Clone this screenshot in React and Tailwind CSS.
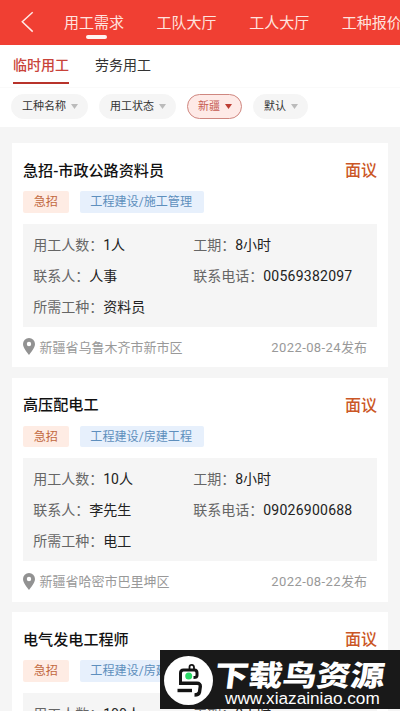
import React from 'react';

const NAV = ['用工需求', '工队大厅', '工人大厅', '工种报价'];

const FILTERS = [
  { label: '工种名称' },
  { label: '用工状态' },
  { label: '新疆', active: true },
  { label: '默认' },
];

const JOBS = [
  { title: '急招-市政公路资料员', category: '工程建设/施工管理', count: '1人', hours: '8小时', contact: '人事', phone: '00569382097', trade: '资料员', place: '新疆省乌鲁木齐市新市区', date: '2022-08-24' },
  { title: '高压配电工', category: '工程建设/房建工程', count: '10人', hours: '8小时', contact: '李先生', phone: '09026900688', trade: '电工', place: '新疆省哈密市巴里坤区', date: '2022-08-22' },
  { title: '电气发电工程师', category: '工程建设/房建工程', count: '100人', hours: '8小时' },
];

function Header() {
  return (
    <header className="flex h-[44.5px] shrink-0 items-center overflow-hidden bg-[#f03f33] text-[15px] text-[#ffe3df]">
      <svg className="ml-[20px] mr-[30px] h-[22px] w-[14px] shrink-0" viewBox="0 0 14 22" fill="none" stroke="#ffe9e6" strokeWidth="1.5">
        <path d="M12.7 1.2 2.3 10.8 12.7 20.6" />
      </svg>
      <nav className="flex gap-[32.6px]">
        {NAV.map((item, i) => (
          <div key={item} className="relative shrink-0 whitespace-nowrap pt-px leading-[44px]">
            {item}
            {i === 0 && <span className="absolute left-[22px] top-[35px] h-[4px] w-[21px] rounded-full bg-[#fff3f1]" />}
          </div>
        ))}
      </nav>
    </header>
  );
}

function Field({ label, value }) {
  return (
    <div className="whitespace-nowrap text-[#666]">
      {label}：<span className={/^\d{5}/.test(value) ? 'tracking-[0.25px] text-[#222]' : 'text-[#222]'}>{value}</span>
    </div>
  );
}

function JobCard({ job }) {
  return (
    <article className="flex h-[224.4px] shrink-0 flex-col bg-white px-[11px] pt-[16px]">
      <div className="flex h-[24px] items-center justify-between font-medium">
        <h2 className="text-[15.1px] text-[#111]">{job.title}</h2>
        <span className="text-[16px] text-[#cb5726]">面议</span>
      </div>
      <div className="mt-[8px] flex gap-[11px] text-[12.1px] leading-[20.5px]">
        <span className="w-[45.5px] rounded-[2px] bg-[#feece4] pt-px text-center text-[#c2683f]">急招</span>
        <span className="rounded-[2px] bg-[#e7f0fc] pl-[10.8px] pr-[11.7px] pt-px text-[#5e8fbd]">{job.category}</span>
      </div>
      <div className="mt-[11px] grid h-[103px] shrink-0 grid-cols-[160px_1fr] content-start bg-[#f5f5f5] pl-[10.2px] pt-[6px] text-[14px] leading-[31px]">
        <Field label="用工人数" value={job.count} />
        <Field label="工期" value={job.hours} />
        {job.contact && (
          <>
            <Field label="联系人" value={job.contact} />
            <Field label="联系电话" value={job.phone} />
            <Field label="所需工种" value={job.trade} />
          </>
        )}
      </div>
      {job.place && (
        <div className="flex h-[41px] items-center pr-[10px] text-[13px] text-[#999]">
          <svg className="mr-[4.5px] h-[17px] w-[12px]" viewBox="0 0 12 17" fill="#929292">
            <path fillRule="evenodd" d="M6 0a6 6 0 0 0-6 6c0 4 4.200 8.600 6 11 1.800-2.400 6-7 6-11a6 6 0 0 0-6-6Zm0 3.800a2.200 2.200 0 1 1 0 4.400 2.200 2.200 0 0 1 0-4.400Z" />
          </svg>
          <span className="pt-px">{job.place}</span>
          <span className="ml-auto pt-px"><span className="tracking-[0.4px]">{job.date}</span>发布</span>
        </div>
      )}
    </article>
  );
}

function SiteBadge() {
  return (
    <aside className="absolute left-[160px] top-[650px] flex h-[59px] w-[240px] bg-[#191919] text-white">
      <svg className="ml-[4px] mt-[6px] h-[49px] w-[49px] shrink-0" viewBox="0 0 49 49" fill="none">
        <circle cx="24.500" cy="24.500" r="24.500" fill="white" />
        <g stroke="#141414" strokeWidth="3" strokeLinejoin="round">
          <path d="M25.500 14V11Q25.500 8.800 27.800 8.800Q30 8.800 30 11.500V14" strokeWidth="1.800" />
          <path d="M16.500 29V17Q16.500 14 19.500 14H30.500Q33 14 33 17V19.500Q33 21.500 29.500 21.500" />
          <path d="M15 27.300H33Q36.500 27.300 36.300 30.500L35.500 36Q34.800 39 30.500 39" strokeWidth="3.400" />
          <path d="M13.500 34.500H28" strokeWidth="3.400" />
        </g>
        <circle cx="24.700" cy="20" r="3.500" fill="#2bd967" />
      </svg>
      <div className="ml-[2px] flex flex-col">
        <div className="mt-[9px] h-[30px] -skew-x-6 scale-y-[0.85] whitespace-nowrap text-[34px] font-black leading-[30px] font-['Noto_Sans_CJK_SC',sans-serif]">下载鸟资源</div>
        <div className="ml-[10px] whitespace-nowrap text-[17.2px] leading-[18px] font-['Liberation_Sans',sans-serif]">www.xiazainiao.com</div>
      </div>
    </aside>
  );
}

export default function App() {
  return (
    <main className="relative flex h-[711px] w-[400px] flex-col overflow-hidden bg-[#f5f5f5] font-[Roboto,'Noto_Sans_CJK_SC',sans-serif]">
      <Header />
      <section className="h-[82px] shrink-0 bg-white">
        <div className="flex h-[43px] gap-[26px] border-b border-[#fafafa] pl-[13px] text-[14px] leading-[41px] text-[#333]">
          <div className="h-[39.500px] border-b-2 border-[#b8332b] font-medium text-[#c9433a]">临时用工</div>
          <div>劳务用工</div>
        </div>
        <div className="flex gap-[11px] pl-[11px] pt-[6.500px] text-[11px]">
          {FILTERS.map(({ label, active }) => (
            <button
              key={label}
              className={`flex h-[25px] items-center gap-[5px] rounded-full border pl-[10px] pr-[9px] ${active ? 'border-[#cf8780] bg-[#feeae7] text-[#c65b52]' : 'border-[#f5f5f5] bg-[#f5f5f5] text-[#333]'}`}
            >
              <span className="pt-[2px]">{label}</span>
              <svg className={`h-[5px] w-[7px] ${active ? 'fill-[#bd3d34]' : 'fill-[#bbb]'}`} viewBox="0 0 7 5">
                <path d="M0 0h7L3.500 5Z" />
              </svg>
            </button>
          ))}
        </div>
      </section>
      <div className="flex flex-col gap-[10.200px] px-[12px] pt-[16.500px]">
        {JOBS.map((job) => (
          <JobCard key={job.title} job={job} />
        ))}
      </div>
      <SiteBadge />
    </main>
  );
}
